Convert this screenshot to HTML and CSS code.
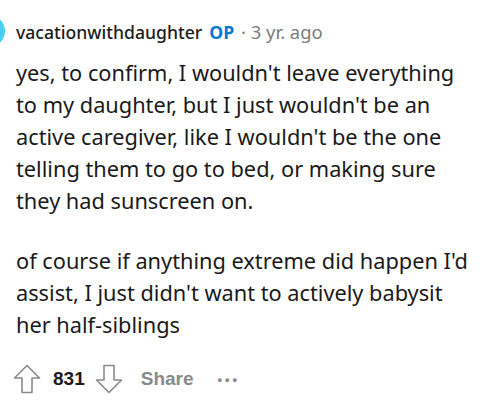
FILE: index.html
```html
<!DOCTYPE html>
<html>
<head>
<meta charset="utf-8">
<link rel="stylesheet" href="styles.css">
</head>
<body>
<div class="comment">
  <div class="avatar"></div>
  <div class="header">
    <span class="user">vacationwithdaughter</span>
    <span class="op">OP</span>
    <span class="meta">· 3 yr. ago</span>
  </div>
  <div class="body">
    <p>yes, to confirm, I wouldn't leave everything to my daughter, but I just wouldn't be an active caregiver, like I wouldn't be the one telling them to go to bed, or making sure they had sunscreen on.</p>
    <p>of course if anything extreme did happen I'd assist, I just didn't want to actively babysit her half-siblings</p>
  </div>
  <div class="actions">
    <svg class="arrow" width="28" height="30" viewBox="0 0 28 30"><path d="M14 1.5 L26.5 14 H19 V28.5 H9 V14 H1.5 Z" fill="none" stroke="#878a8c" stroke-width="1.6" stroke-linejoin="round"/></svg>
    <span class="score">831</span>
    <svg class="arrow" width="28" height="30" viewBox="0 0 28 30"><path d="M14 28.5 L26.5 16 H19 V1.5 H9 V16 H1.5 Z" fill="none" stroke="#878a8c" stroke-width="1.6" stroke-linejoin="round"/></svg>
    <span class="share">Share</span>
    <span class="dots">•••</span>
  </div>
</div>
</body>
</html>
```
FILE: styles.css
```css
html, body { margin: 0; padding: 0; background: #fff; }
.comment { position: relative; width: 483px; height: 402px; overflow: hidden; }
.avatar { position: absolute; left: -27px; top: 15px; width: 32px; height: 32px; border-radius: 50%; background: #46d2f0; }
.header { display: flex; align-items: baseline; gap: 7px; padding: 20px 0 0 16px; height: 24px; font-family: "Noto Sans", sans-serif; font-size: 17.6px; line-height: 24px; }
.user { color: #1c1c1c; font-weight: 500; }
.op { color: #0079d3; font-weight: 700; }
.meta { color: #7c7c7c; font-size: 18.4px; }
.body { padding: 13px 6px 0 16px; font-family: "Noto Sans", sans-serif; font-size: 21.75px; line-height: 32px; color: #1a1a1b; }
.body p { margin: 0 0 28px 0; }
.body p:last-child { margin-bottom: 0; }
.actions { display: flex; align-items: center; padding: 0 0 0 13px; margin-top: 23px; font-family: "Liberation Sans", Arial, sans-serif; font-size: 19px; font-weight: 700; }
.score { color: #1a1a1b; margin: 0 10px 0 12px; }
.share { color: #878a8c; margin-left: 18px; }
.dots { color: #878a8c; margin-left: 24px; font-size: 13px; letter-spacing: 3px; }
```
